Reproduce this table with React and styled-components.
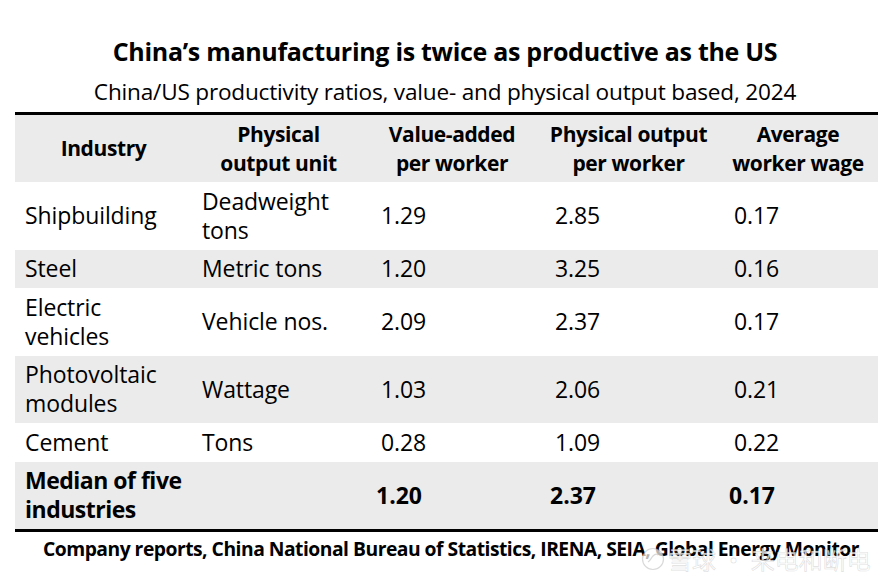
import React from "react";
import styled, { createGlobalStyle } from "styled-components";

const GlobalStyle = createGlobalStyle`
  html, body { margin: 0; padding: 0; background: #ffffff; }
  body { font-family: "Open Sans", "Noto Sans", "Noto Sans CJK SC", sans-serif; color: #000; }
`;

const Page = styled.div`
  position: relative;
  width: 890px;
  height: 584px;
  overflow: hidden;
  background: #fff;
  padding-top: 34px;
  box-sizing: border-box;
`;

const Title = styled.h1`
  margin: 0;
  text-align: center;
  font-size: 25px;
  line-height: 34px;
  font-weight: 700;
  letter-spacing: -0.3px;
`;

const Subtitle = styled.h2`
  margin: 9px 0 0;
  text-align: center;
  font-size: 22.6px;
  line-height: 30px;
  font-weight: 400;
  letter-spacing: -0.2px;
`;

const Table = styled.div`
  display: grid;
  grid-template-columns: 177px 173px 174px 179px 160px;
  margin: 5px 12px 0 15px;
  border-top: 3px solid #000;
  border-bottom: 3px solid #000;
`;

const Row = styled.div`
  display: contents;
`;

const Cell = styled.div`
  background: ${(p) => (p.$shade ? "#ebebeb" : "#ffffff")};
  padding: 4.75px 6px 4.75px 10px;
  font-size: 23px;
  line-height: 29px;
  font-weight: ${(p) => (p.$bold ? 700 : 400)};
  display: flex;
  align-items: center;
  letter-spacing: ${(p) => (p.$bold ? "-0.5px" : "-0.1px")};
`;

const NumCell = styled(Cell)`
  padding-left: ${(p) => (p.$bold ? "11px" : "16px")};
  letter-spacing: ${(p) => (p.$bold ? "0px" : "-0.1px")};
`;

const HeadCell = styled.div`
  background: #ebebeb;
  padding: 4.5px 6px;
  font-size: 21px;
  line-height: 29px;
  font-weight: 700;
  text-align: center;
  display: flex;
  align-items: center;
  justify-content: center;
  letter-spacing: -0.4px;
`;

const Source = styled.p`
  margin: 5px 0 0;
  text-align: center;
  font-size: 19.3px;
  line-height: 24px;
  font-weight: 700;
  letter-spacing: -0.5px;
  padding-left: 12px;
`;

const Watermark = styled.div`
  position: absolute;
  left: 641px;
  top: 543px;
  display: flex;
  align-items: center;
  gap: 3px;
  font-family: "Noto Sans CJK SC", sans-serif;
  font-size: 24px;
  line-height: 32px;
  letter-spacing: 0px;
  color: rgba(255, 255, 255, 0.75);
  -webkit-text-stroke: 0.7px rgba(185, 185, 185, 0.45);
  pointer-events: none;
`;

const headers = [
  ["Industry"],
  ["Physical", "output unit"],
  ["Value-added", "per worker"],
  ["Physical output", "per worker"],
  ["Average", "worker wage"],
];

const rows = [
  { ind: ["Shipbuilding"], unit: ["Deadweight", "tons"], v: ["1.29", "2.85", "0.17"] },
  { ind: ["Steel"], unit: ["Metric tons"], v: ["1.20", "3.25", "0.16"] },
  { ind: ["Electric", "vehicles"], unit: ["Vehicle nos."], v: ["2.09", "2.37", "0.17"] },
  { ind: ["Photovoltaic", "modules"], unit: ["Wattage"], v: ["1.03", "2.06", "0.21"] },
  { ind: ["Cement"], unit: ["Tons"], v: ["0.28", "1.09", "0.22"] },
  { ind: ["Median of five", "industries"], unit: [""], v: ["1.20", "2.37", "0.17"], bold: true },
];

const Lines = ({ lines }) => (
  <span>
    {lines.map((l, i) => (
      <React.Fragment key={i}>
        {i > 0 && <br />}
        {l}
      </React.Fragment>
    ))}
  </span>
);

const LogoMark = () => (
  <svg width="24" height="24" viewBox="0 0 24 24" fill="none">
    <circle cx="12" cy="12" r="10.5" stroke="rgba(180,180,180,0.5)" strokeWidth="1.2" fill="rgba(255,255,255,0.7)" />
    <path d="M7 15c2-1 3-4 5-6s4-2 5-1" stroke="rgba(180,180,180,0.5)" strokeWidth="1.2" fill="none" />
  </svg>
);

export default function App() {
  return (
    <Page>
      <GlobalStyle />
      <Title>China’s manufacturing is twice as productive as the US</Title>
      <Subtitle>China/US productivity ratios, value- and physical output based, 2024</Subtitle>
      <Table>
        <Row>
          {headers.map((h, i) => (
            <HeadCell key={i}>
              <Lines lines={h} />
            </HeadCell>
          ))}
        </Row>
        {rows.map((r, i) => {
          const shade = i % 2 === 1;
          return (
            <Row key={i}>
              <Cell $shade={shade} $bold={r.bold}>
                <Lines lines={r.ind} />
              </Cell>
              <Cell $shade={shade} $bold={r.bold}>
                <Lines lines={r.unit} />
              </Cell>
              {r.v.map((v, j) => (
                <NumCell key={j} $shade={shade} $bold={r.bold}>
                  {v}
                </NumCell>
              ))}
            </Row>
          );
        })}
      </Table>
      <Source>
        Company reports, China National Bureau of Statistics, IRENA, SEIA, Global Energy Monitor
      </Source>
      <Watermark>
        <LogoMark />
        <span>雪球 · 来电和断电</span>
      </Watermark>
    </Page>
  );
}
